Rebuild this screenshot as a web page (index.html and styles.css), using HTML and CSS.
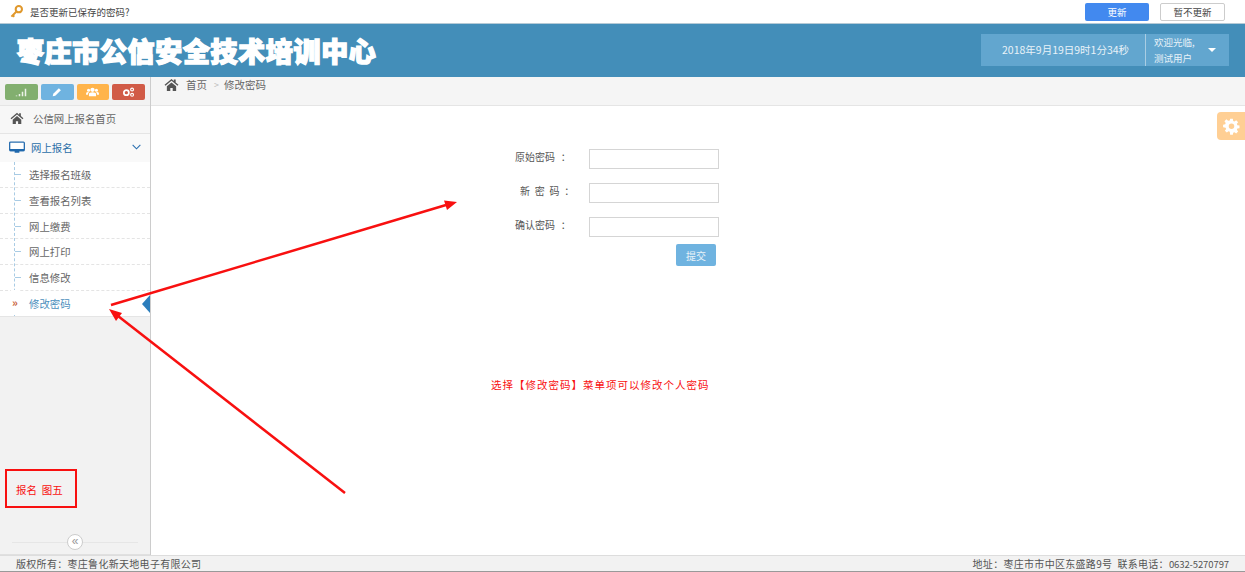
FILE: index.html
```html
<!DOCTYPE html>
<html lang="zh-CN">
<head>
<meta charset="utf-8">
<title>修改密码</title>
<link rel="stylesheet" href="styles.css">
</head>
<body>
<div class="page">
  <div class="savebar">
    <svg class="key" viewBox="0 0 14 14" width="13" height="13"><circle cx="9.5" cy="4.5" r="3.4" fill="none" stroke="#e0982c" stroke-width="2.2"/><path d="M7 7 1.5 12.5M3 11l1.6 1.6" stroke="#e0982c" stroke-width="2.2" fill="none"/></svg>
    <span class="savetext">是否更新已保存的密码?</span>
    <span class="grow"></span>
    <button class="btn-update">更新</button>
    <button class="btn-skip">暂不更新</button>
  </div>
  <header class="head">
    <div class="brand">枣庄市公信安全技术培训中心</div>
    <div class="clock">2018年9月19日9时1分34秒</div>
    <div class="user">
      <span class="welcome">欢迎光临,<br>测试用户</span>
      <span class="caret"></span>
    </div>
  </header>
  <div class="body">
    <aside class="side">
      <div class="shortcuts">
        <span class="sc green"><svg viewBox="0 0 16 12" width="12" height="9"><path d="M1 10h2v1H1zM5 8h2v3H5zM9 5h2v6H9zM13 1h2v10h-2z" fill="#fff" opacity=".85"/></svg></span>
        <span class="sc blue"><svg viewBox="0 0 14 14" width="10" height="10"><path d="M1 13l.8-3.6L9.6 1.6l2.8 2.8-7.8 7.8z" fill="#fff"/></svg></span>
        <span class="sc orange"><svg viewBox="0 0 18 14" width="13" height="10"><circle cx="9" cy="4" r="3" fill="#fff"/><circle cx="3.5" cy="4.5" r="2.2" fill="#fff"/><circle cx="14.5" cy="4.5" r="2.2" fill="#fff"/><path d="M4 13V10q0-2.500 5-2.500T14 10v3zM0 11V9q0-2 3-2l1 .5Q2.500 9 2.500 11zM18 11V9q0-2-3-2l-1 .5q1.500 1.500 1.500 3.500z" fill="#fff"/></svg></span>
        <span class="sc red"><svg viewBox="0 0 18 14" width="13" height="10"><circle cx="6" cy="8" r="3.500" fill="none" stroke="#fff" stroke-width="2.400"/><circle cx="14" cy="3.500" r="2" fill="none" stroke="#fff" stroke-width="1.600"/><circle cx="14" cy="11" r="2" fill="none" stroke="#fff" stroke-width="1.600"/></svg></span>
      </div>
      <div class="nav-home">
        <svg class="home" viewBox="0 0 16 14" width="14" height="12"><path d="M8 1 .5 7.300l1 1.100L8 3l6.500 5.400 1-1.100L12.500 4.800V1.500h-2v1.600zM3 9v5h3.700v-3.300h2.600V14H13V9L8 4.800z" fill="#555"/></svg>
        <span>公信网上报名首页</span>
      </div>
      <div class="nav-group">
        <svg viewBox="0 0 17 13" width="16" height="13"><rect x=".7" y=".7" width="15.600" height="9" rx="1" fill="#fff" stroke="#2a6fb0" stroke-width="1.400"/><path d="M.7 8h15.600v2.500H.7zM6 10.500h5V12H6z" fill="#1f68ad"/></svg>
        <span class="nav-group-text">网上报名</span>
        <svg class="chev" viewBox="0 0 10 6" width="9" height="6"><path d="M.7.7 5 5 9.300.7" fill="none" stroke="#2a6fb0" stroke-width="1.200"/></svg>
      </div>
      <ul class="submenu">
        <li>选择报名班级</li>
        <li>查看报名列表</li>
        <li>网上缴费</li>
        <li>网上打印</li>
        <li>信息修改</li>
        <li class="active"><i class="mark">»</i>修改密码<b class="pointer"></b></li>
      </ul>
      <div class="side-fill">
        <div class="note">报名&nbsp;&nbsp;图五</div>
        <div class="collapse"><span class="collapse-btn">«</span></div>
      </div>
    </aside>
    <main class="main">
      <div class="crumbs">
        <svg viewBox="0 0 16 14" width="15" height="13"><path d="M8 1 .5 7.300l1 1.100L8 3l6.500 5.400 1-1.100L12.500 4.800V1.500h-2v1.600zM3 9v5h3.700v-3.300h2.600V14H13V9L8 4.800z" fill="#555"/></svg>
        <span class="crumb-home">首页</span>
        <span class="crumb-sep">&gt;</span>
        <span>修改密码</span>
      </div>
      <form class="form">
        <div class="row"><label>原始密码 ：</label><input type="password"></div>
        <div class="row"><label class="spaced">新 密 码 ：</label><input type="password"></div>
        <div class="row"><label>确认密码 ：</label><input type="password"></div>
        <button type="button" class="submit">提交</button>
      </form>
      <p class="hint">选择【修改密码】菜单项可以修改个人密码</p>
      <div class="gear">
        <svg viewBox="0 0 20 20" width="17" height="17"><path fill="#fff" fill-rule="evenodd" d="M8.400 1h3.200l.4 2.500 1.500.6 2-1.500 2.300 2.300-1.500 2 .6 1.500 2.500.4v3.200l-2.500.4-.6 1.500 1.500 2-2.300 2.300-2-1.500-1.500.6-.4 2.500H8.400L8 16.300l-1.500-.6-2 1.500-2.300-2.300 1.500-2-.6-1.500L.1 11V7.800l2.500-.4.6-1.500-1.500-2 2.300-2.300 2 1.500L8 3zM10 6.500a3 3 0 1 0 0 6.500 3 3 0 0 0 0-6.500z"/></svg>
      </div>
    </main>
  </div>
  <footer class="foot">
    <span>版权所有：枣庄鲁化新天地电子有限公司</span>
    <span>地址：枣庄市市中区东盛路9号&nbsp;&nbsp;联系电话：<span class="phone">0632-5270797</span></span>
  </footer>
  <svg class="arrows" viewBox="0 0 1245 572" width="1245" height="572">
    <path d="M111 305 446 205" stroke="#f81010" stroke-width="2.500" fill="none"/>
    <path d="M457 202 444 200.500 447 210z" fill="#f81010"/>
    <path d="M345 493 118 316" stroke="#f81010" stroke-width="2.500" fill="none"/>
    <path d="M109 309 122 313 116 321z" fill="#f81010"/>
  </svg>
</div>
</body>
</html>
```
FILE: styles.css
```css
* { box-sizing: border-box; }
html, body { margin: 0; padding: 0; }
body { font-family: "Noto Sans CJK SC", "Liberation Sans", sans-serif; font-size: 10px; color: #555; background: #fff; }
.page { position: relative; width: 1245px; height: 572px; overflow: hidden; display: flex; flex-direction: column; }
.savebar { height: 24px; flex: none; display: flex; align-items: center; padding: 0 20px 0 10px; border-bottom: 1px solid #b5cad6; background: #fff; }
.key { flex: none; }
.savetext { margin-left: 7px; font-size: 9.5px; color: #444; }
.grow { flex: 1; }
.btn-update { width: 64px; height: 18px; padding: 0; border: 0; border-radius: 2px; background: #4289ef; color: #fff; font: inherit; font-size: 9.5px; }
.btn-skip { width: 65px; height: 18px; margin-left: 11px; padding: 0; border: 1px solid #ccc; border-radius: 2px; background: #fff; color: #444; font: inherit; font-size: 9.5px; }
.head { height: 53px; flex: none; display: flex; align-items: center; background: #438eb9; padding-right: 16px; }
.brand { flex: 1; padding-left: 17px; font-size: 27px; line-height: 30px; letter-spacing: .65px; font-weight: 900; color: #fff; -webkit-text-stroke: 1.4px #fff; white-space: nowrap; }
.clock { width: 165px; height: 32px; margin-bottom: 1px; line-height: 32px; padding-left: 21px; background: #62a6cf; color: #e8f2f8; font-size: 10.5px; border-right: 1px solid #a9cde3; white-space: nowrap; }
.user { width: 83px; height: 32px; margin-bottom: 1px; display: flex; align-items: center; justify-content: space-between; padding: 0 13px 0 8px; background: #62a6cf; color: #e8f2f8; font-size: 9.5px; line-height: 16px; }
.caret { width: 0; height: 0; border: 4px solid transparent; border-top-color: #fff; border-bottom: 0; }
.body { flex: 1; display: flex; min-height: 0; }
.side { width: 151px; flex: none; display: flex; flex-direction: column; background: #f2f2f2; border-right: 1px solid #ccc; }
.shortcuts { height: 29px; flex: none; display: flex; gap: 3px; padding: 7px 5px 0 5px; border-bottom: 1px solid #e5e5e5; }
.sc { width: 33px; height: 16px; border-radius: 2px; display: flex; align-items: center; justify-content: center; }
.green { background: #82af6f; }
.blue { background: #6fb3e0; }
.orange { background: #ffb44b; }
.red { background: #d15b47; }
.nav-home { height: 28px; flex: none; display: flex; align-items: center; gap: 9px; padding: 0 0 3px 10px; background: #f7f7f7; border-bottom: 1px solid #e5e5e5; color: #666; font-size: 10.4px; }
.nav-group { height: 28px; flex: none; display: flex; align-items: center; padding: 0 9px 2px 9px; background: #f9f9f9; color: #2b6fa8; font-size: 10.4px; }
.nav-group-text { flex: 1; margin-left: 6px; }
.submenu { list-style: none; margin: 0; padding: 0; background: #fff; border-left: 0; position: relative; }
.submenu::before { content: ""; position: absolute; left: 14px; top: 0; bottom: 0; border-left: 1px dashed #a8cbe4; }
.submenu li { position: relative; height: 25.8px; line-height: 25px; padding-left: 29px; font-size: 10.4px; color: #666; border-bottom: 1px dashed #e4e4e4; }
.submenu li::before { content: ""; position: absolute; left: 15px; top: 12px; width: 6px; border-top: 1px dashed #a8cbe4; }
.submenu li.active { color: #4c8fbd; border-bottom: 1px solid #e5e5e5; }
.submenu li.active::before { display: none; }
.mark { position: absolute; left: 11px; top: -1px; padding: 0 1px; background: #fff; font-style: normal; font-weight: 700; color: #c86139; font-size: 11px; }
.pointer { position: absolute; right: 0; top: 4px; width: 0; height: 0; border: 9px solid transparent; border-left: 0; border-right: 8px solid #2b7dbc; }
.side-fill { flex: 1; display: flex; flex-direction: column; justify-content: flex-end; border-bottom: 1px solid #e0e0e0; }
.note { width: 72px; height: 39px; margin: 0 0 26px 5px; border: 2px solid #f81010; color: #f81010; font-size: 10.5px; line-height: 37px; padding-left: 9px; }
.collapse { height: 16px; margin-bottom: 4px; display: flex; justify-content: center; align-items: center; background: linear-gradient(#e6e6e6, #e6e6e6) center / 126px 1px no-repeat; }
.collapse-btn { width: 16px; height: 16px; border-radius: 50%; border: 1px solid #ccc; background: #fff; color: #999; font: 12px/12px "Liberation Sans", sans-serif; text-align: center; }
.main { position: relative; flex: 1; background: #fff; }
.crumbs { height: 29px; display: flex; align-items: center; padding: 0 0 14px 13px; background: #f5f5f5; border-bottom: 1px solid #e5e5e5; font-size: 10.5px; color: #666; }
.crumb-home { margin-left: 7px; }
.crumb-sep { margin: 0 5px 0 7px; color: #bbb; font-size: 9px; }
.form { width: 229px; margin: 43px 0 0 338px; }
.row { display: flex; height: 20px; align-items: flex-start; margin-bottom: 14px; }
.row label { width: 100px; flex: none; text-align: left; padding-left: 26px; font-size: 10px; line-height: 16px; word-spacing: 3.5px; color: #555; white-space: nowrap; }
.row label.spaced { padding-left: 31px; word-spacing: 2.5px; }
.row input { width: 130px; height: 20px; flex: none; border: 1px solid #d5d5d5; background: #fff; padding: 0; }
.submit { display: block; width: 40px; height: 22px; margin: -7px 0 0 187px; padding: 0; border: 0; border-radius: 2px; background: #6fb3e0; color: #e8f2f8; font: inherit; font-size: 10px; }
.hint { margin: 112px 0 0 340px; color: #f81010; font-size: 10.5px; letter-spacing: 1px; line-height: 14px; }
.gear { position: absolute; right: 0; top: 35px; width: 28px; height: 28px; border-radius: 4px 0 0 4px; background: #ffcf94; display: flex; align-items: center; justify-content: center; }
.foot { height: 17px; flex: none; display: flex; justify-content: space-between; align-items: center; padding: 0 16px; background: #f2f2f2; border-top: 1px solid #ddd; border-bottom: 1px solid #999; color: #555; font-size: 10px; letter-spacing: .3px; }
.phone { font-size: 9.5px; letter-spacing: -.1px; }
.arrows { position: absolute; left: 0; top: 0; pointer-events: none; }
```
